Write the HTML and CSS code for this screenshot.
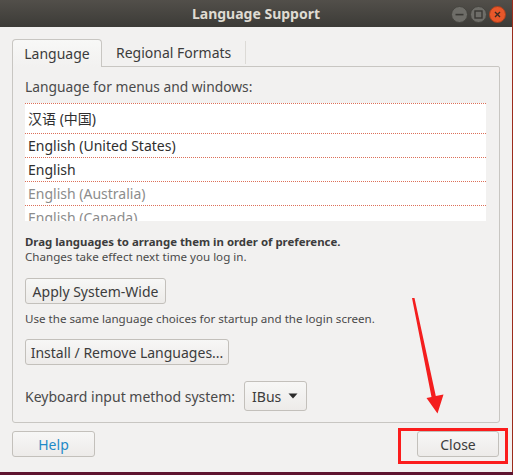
FILE: index.html
```html
<!DOCTYPE html>
<html>
<head>
<meta charset="utf-8">
<link rel="stylesheet" href="styles.css">
</head>
<body>
<div class="screen">
  <div class="window">
    <div class="titlebar">
      <span></span>
      <span class="title">Language Support</span>
      <div class="controls">
        <svg class="wbtn" width="17" height="17" viewBox="0 0 17 17"><circle cx="8.5" cy="8.5" r="8" fill="#6e6d68" stroke="#45443f"/><rect x="4.5" y="7.8" width="8" height="1.6" fill="#393834"/></svg>
        <svg class="wbtn" width="17" height="17" viewBox="0 0 17 17"><circle cx="8.5" cy="8.5" r="8" fill="#6e6d68" stroke="#45443f"/><rect x="5" y="5" width="7" height="7" fill="none" stroke="#393834" stroke-width="1.4"/></svg>
        <svg class="wbtn" width="17" height="17" viewBox="0 0 17 17"><circle cx="8.5" cy="8.5" r="8" fill="#e8572a" stroke="#a8401e"/><path d="M6 6 L11 11 M11 6 L6 11" stroke="#3b2a22" stroke-width="1.4"/></svg>
      </div>
    </div>
    <div class="content">
      <div class="tabs">
        <div class="tab active">Language</div>
        <div class="tab">Regional Formats</div>
      </div>
      <div class="panel">
        <div class="label">Language for menus and windows:</div>
        <div class="list">
          <div class="row cjk">汉语 (中国)</div>
          <div class="row">English (United States)</div>
          <div class="row">English</div>
          <div class="row dim">English (Australia)</div>
          <div class="row dim">English (Canada)</div>
        </div>
        <div class="hint"><div class="strong">Drag languages to arrange them in order of preference.</div><div>Changes take effect next time you log in.</div></div>
        <button class="btn apply">Apply System-Wide</button>
        <div class="note">Use the same language choices for startup and the login screen.</div>
        <button class="btn install">Install / Remove Languages...</button>
        <div class="kbd">
          <span>Keyboard input method system:</span>
          <div class="combo">IBus <svg width="10" height="6" viewBox="0 0 10 6"><path d="M0.5 0.5 H9.5 L5 5.5 Z" fill="#2b2b2b"/></svg></div>
        </div>
      </div>
      <div class="actions">
        <button class="btn help">Help</button>
        <button class="btn close">Close</button>
      </div>
    </div>
  </div>
  <svg class="annot" width="513" height="475" viewBox="0 0 513 475">
    <rect x="399.5" y="429.5" width="107" height="33" fill="none" stroke="#fb1c1c" stroke-width="3"/>
    <polygon points="412,298 414.5,298 435.8,396 443.5,394.5 437.5,413.5 426.5,398 431.5,397" fill="#f41e1e"/>
  </svg>
</div>
</body>
</html>
```

FILE: styles.css
```css
html, body {
  margin: 0;
  padding: 0;
}
body {
  width: 513px;
  height: 475px;
  background: #5f1530;
  overflow: hidden;
  font-family: "Noto Sans", "Noto Sans CJK SC", sans-serif;
}
.screen {
  position: relative;
  width: 513px;
  height: 475px;
}
.window {
  width: 512px;
  height: 472px;
  background: #f2f1f0;
  border-right: 1px solid #9c2c1c;
  display: flex;
  flex-direction: column;
}
.titlebar {
  height: 27px;
  background: linear-gradient(#524f4a, #3c3b37);
  display: grid;
  grid-template-columns: 1fr auto 1fr;
  align-items: center;
}
.title {
  color: #dfdbd2;
  font-weight: bold;
  font-size: 14px;
  line-height: 27px;
}
.controls {
  justify-self: end;
  display: flex;
  gap: 2px;
  padding-right: 6px;
  padding-top: 1px;
}
.wbtn { display: block; }
.content {
  padding: 12px 12px 0 12px;
  display: flex;
  flex-direction: column;
}
.tabs {
  display: flex;
  height: 27px;
  align-items: stretch;
}
.tab {
  font-size: 14px;
  color: #3c3c3c;
  display: flex;
  align-items: center;
  padding: 0 14px 0 14px;
}
.tab.active {
  width: 90px;
  box-sizing: border-box;
  justify-content: center;
  padding: 0;
  border: 1px solid #c8c6c2;
  border-bottom: none;
  border-radius: 4px 4px 0 0;
  background: linear-gradient(#f8f8f7, #f2f1f0);
  margin-bottom: -1px;
  position: relative;
  z-index: 1;
}
.tab:not(.active) {
  border-right: 1px solid #dcdad6;
  margin: 2px 0 2px 0;
}
.panel {
  border: 1px solid #c8c6c2;
  border-radius: 0 2px 3px 3px;
  padding: 11px 12px 11px 12px;
  display: flex;
  flex-direction: column;
  align-items: flex-start;
}
.label {
  font-size: 13.8px;
  line-height: 18px;
  color: #4a4a4a;
  margin-bottom: 7px;
}
.list {
  align-self: stretch;
  margin-right: 1px;
  height: 118px;
  background: #ffffff;
  overflow: hidden;
}
.row {
  box-sizing: border-box;
  height: 24px;
  border-top: 1px dotted #dc7059;
  padding-left: 3px;
  font-size: 14px;
  line-height: 23px;
  color: #2f2f2f;
  white-space: nowrap;
}
.row.cjk {
  height: 30px;
  line-height: 29px;
}
.row.dim { color: #8c8c8c; }
.hint {
  margin-top: 13px;
  font-size: 11.6px;
  line-height: 15px;
  color: #4a4a4a;
}
.hint .strong {
  font-weight: bold;
  font-size: 11.4px;
  color: #3c3c3c;
}
.btn {
  font-family: inherit;
  font-size: 14px;
  color: #3c3c3c;
  background: linear-gradient(#f7f7f6, #edebe9);
  border: 1px solid #c3c0bb;
  border-radius: 3px;
  height: 26px;
  padding: 0 4px;
  margin: 0;
  box-sizing: border-box;
  white-space: nowrap;
}
.apply { margin-top: 14px; width: 141px; }
.note {
  margin-top: 7px;
  font-size: 11.6px;
  line-height: 15px;
  color: #4a4a4a;
}
.install { margin-top: 13px; width: 204px; }
.kbd {
  margin-top: 16px;
  display: flex;
  align-items: center;
  gap: 9px;
  font-size: 14px;
  color: #4a4a4a;
}
.combo {
  box-sizing: border-box;
  height: 30px;
  width: 63px;
  border: 1px solid #c3c0bb;
  border-radius: 3px;
  background: linear-gradient(#f7f7f6, #edebe9);
  display: flex;
  align-items: center;
  justify-content: space-between;
  padding: 0 8px 0 7px;
  color: #3c3c3c;
}
.combo svg { display: block; }
.actions {
  margin-top: 8px;
  display: flex;
  justify-content: space-between;
}
.help { width: 83px; color: #1f8ac8; }
.close { width: 82px; margin-right: 1px; }
.annot {
  position: absolute;
  left: 0;
  top: 0;
  pointer-events: none;
}
```
